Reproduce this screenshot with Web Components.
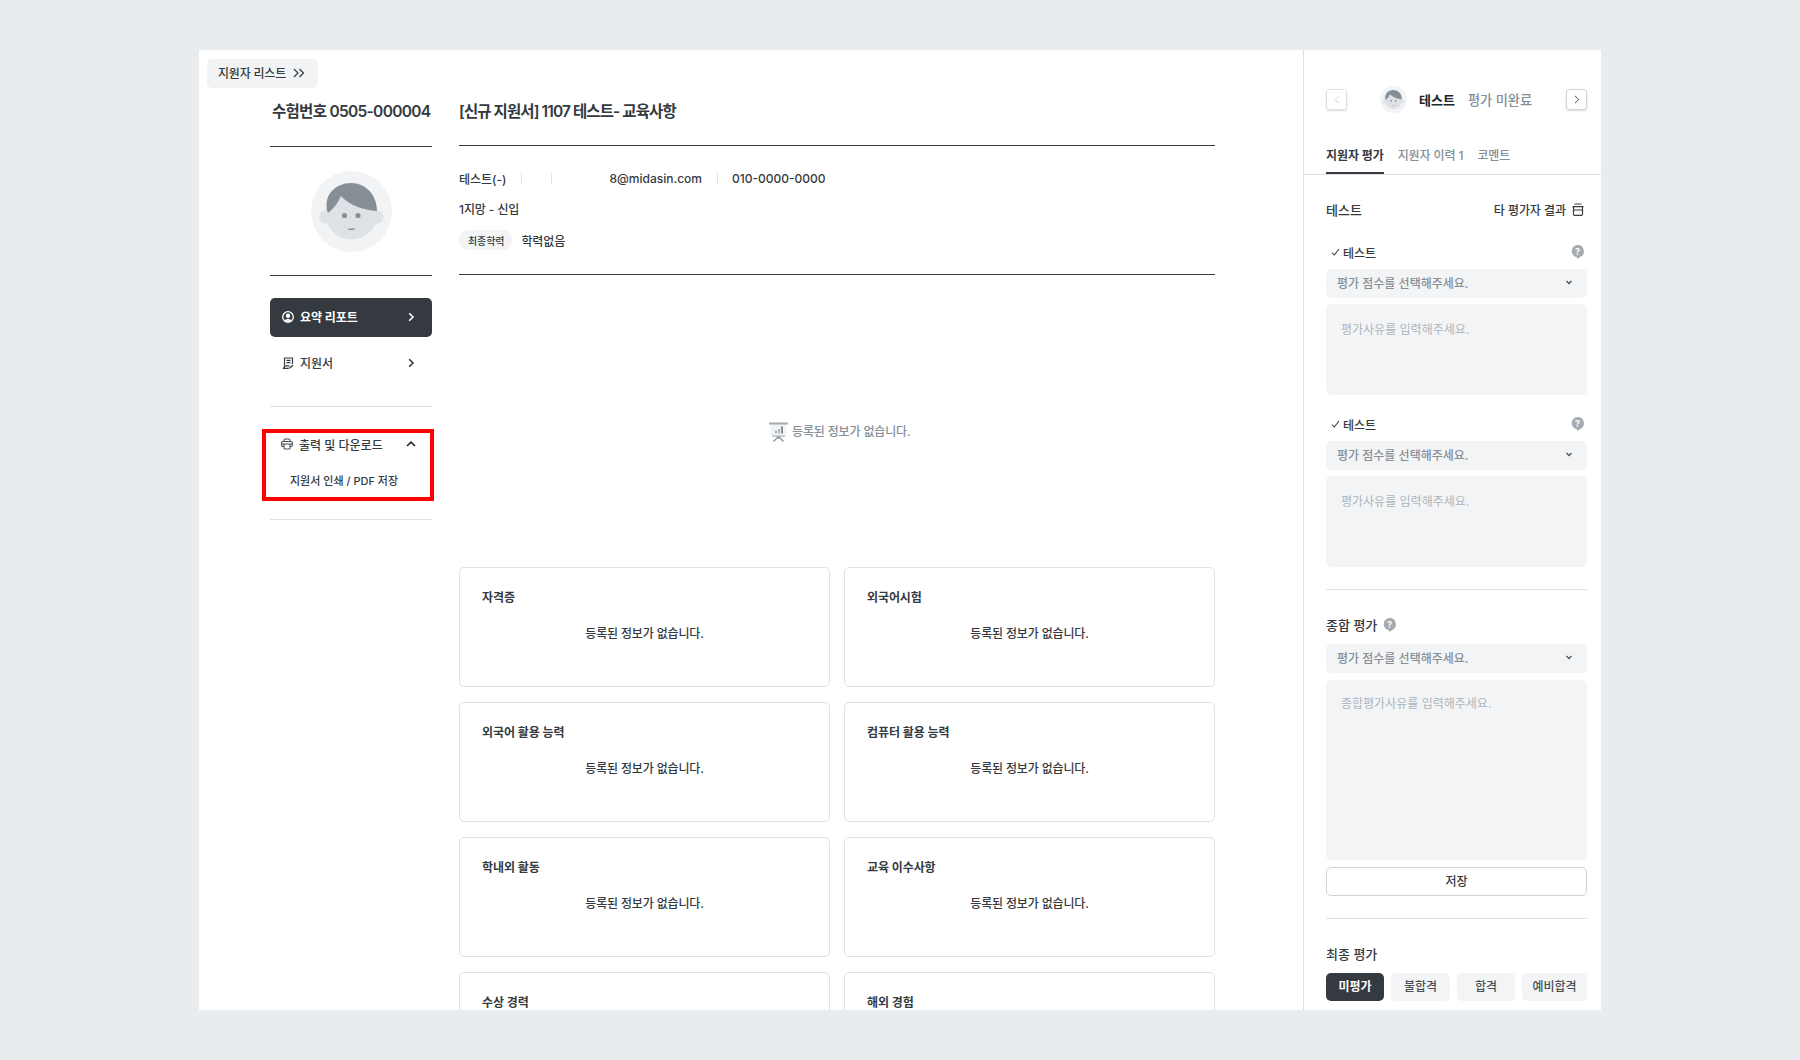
<!DOCTYPE html>
<html lang="ko">
<head>
<meta charset="UTF-8">
<title>지원자 평가</title>
<style>
  html, body { margin: 0; height: 100%; }
  body {
    background: #e9ecef;
    font-family: Inter, "Noto Sans CJK KR", sans-serif;
    color: #343a40;
    box-sizing: border-box;
    padding: 50px 199px;
    overflow: hidden;
  }
</style>
</head>
<body>
<app-frame>
  <list-link slot="main">지원자 리스트</list-link>
  <side-nav slot="side"></side-nav>
  <applicant-summary slot="content"></applicant-summary>
  <empty-note slot="content"></empty-note>
  <card-grid slot="content">
    <info-card msg="등록된 정보가 없습니다.">자격증</info-card>
    <info-card msg="등록된 정보가 없습니다.">외국어시험</info-card>
    <info-card msg="등록된 정보가 없습니다.">외국어 활용 능력</info-card>
    <info-card msg="등록된 정보가 없습니다.">컴퓨터 활용 능력</info-card>
    <info-card msg="등록된 정보가 없습니다.">학내외 활동</info-card>
    <info-card msg="등록된 정보가 없습니다.">교육 이수사항</info-card>
    <info-card>수상 경력</info-card>
    <info-card>해외 경험</info-card>
  </card-grid>
  <eval-panel slot="panel"></eval-panel>
</app-frame>

<script>
  const avatarSvg = `<svg viewBox="0 0 81 81" width="100%" height="100%" style="display:block">
    <circle cx="40.5" cy="40.5" r="40.5" fill="#f1f3f5"/>
    <circle cx="14.5" cy="46" r="6.5" fill="#dee2e6"/><circle cx="66" cy="46" r="6.5" fill="#dee2e6"/>
    <ellipse cx="40.5" cy="42" rx="26" ry="26.5" fill="#dee2e6"/>
    <path d="M17 42C11 24 25 12 40 12c15 0 26 12 26 28-14-1-28-6-36-15-3 7-8 13-13 17z" fill="#868e96"/>
    <circle cx="33.5" cy="44.5" r="2.6" fill="#868e96"/><circle cx="47" cy="44.5" r="2.6" fill="#868e96"/>
    <path d="M36.5 57.5h8c-1 2-7 2-8 0z" fill="#868e96"/>
  </svg>`

  const chevronRight = `<svg width="7" height="10" viewBox="0 0 7 10" fill="none" stroke="currentColor" stroke-width="1.6"><path d="M1.2 1.200 5 5 1.200 8.800"/></svg>`

  const helpIcon = `<svg width="13" height="14" viewBox="0 0 13 14"><path d="M6.500 0a6.300 6.300 0 0 1 2.300 12.200L6.500 14l-.6-1.700A6.200 6.200 0 0 1 6.500 0z" fill="#a5abb2"/><text x="6.500" y="9.800" text-anchor="middle" font-size="9" font-weight="700" fill="#fff" font-family="Inter">?</text></svg>`

  class AppFrame extends HTMLElement {
    connectedCallback() {
      this.attachShadow({mode: 'open'})
      this.shadowRoot.innerHTML = `
      <style>
        :host { display: flex; height: 960px; background: #fff; overflow: hidden; }
        .main { flex: 1; min-width: 0; padding: 9px 0 0 8px; box-sizing: border-box; }
        .columns { display: flex; margin-top: -2px; padding-left: 63px; gap: 27px; }
        .side { width: 162px; flex: none; }
        .content { width: 756px; flex: none; }
        .panel { width: 298px; flex: none; box-sizing: border-box; border-left: 1px solid #dee2e6; }
      </style>
      <div class="main">
        <slot name="main"></slot>
        <div class="columns">
          <div class="side"><slot name="side"></slot></div>
          <div class="content"><slot name="content"></slot></div>
        </div>
      </div>
      <div class="panel"><slot name="panel"></slot></div>`
    }
  }

  class ListLink extends HTMLElement {
    connectedCallback() {
      this.attachShadow({mode: 'open'})
      this.shadowRoot.innerHTML = `
      <style>
        :host { display: flex; width: 111px; height: 29px; box-sizing: border-box; padding: 0 0 2px 11px; gap: 7px;
          align-items: center; background: #f1f3f5; border-radius: 5px; font-size: 12px; letter-spacing: -0.2px; font-weight: 500; color: #343a40; }
      </style>
      <slot></slot>
      <svg width="12" height="10" viewBox="0 0 12 10" fill="none" stroke="#343a40" stroke-width="1.200"><path d="M1 1l4 4-4 4M6.500 1l4 4-4 4"/></svg>`
    }
  }

  class SideNav extends HTMLElement {
    connectedCallback() {
      this.attachShadow({mode: 'open'})
      this.shadowRoot.innerHTML = `
      <style>
        :host { display: block; }
        h2 { margin: 0; height: 45px; padding: 15px 0 0 2px; font-size: 15.5px; line-height: 22px; font-weight: 600; letter-spacing: -0.7px; color: #343a40; white-space: nowrap; }
        .rule { height: 1px; background: #343a40; }
        .photo { width: 81px; height: 81px; margin: 24px auto 23px; }
        .thin { height: 1px; background: #dee2e6; }
        .item { display: flex; align-items: center; height: 39px; box-sizing: border-box; padding: 0 17px 2px 12px; border-radius: 5px; font-size: 12px; font-weight: 600; letter-spacing: -0.1px; gap: 6px; }
        .item .t { flex: 1; }
        .dark { background: #343a40; color: #fff; margin-top: 22px; }
        .plain { margin-top: 7px; margin-bottom: 23px; font-weight: 500; }
        .box { margin: 22px -2px 18px -8px; height: 72px; box-sizing: border-box; border: 4px solid #f00; display: flex; flex-direction: column; }
        .box .head { display: flex; align-items: center; height: 22px; flex: none; padding: 0 14px 0 15px; font-size: 12px; font-weight: 500; gap: 6px; }
        .box .head .t { flex: 1; }
        .box .sub { padding-left: 24px; margin-top: 18px; font-size: 11px; font-weight: 500; line-height: 16px; }
      </style>
      <h2>수험번호 0505-000004</h2>
      <div class="rule"></div>
      <div class="photo">${avatarSvg}</div>
      <div class="rule"></div>
      <div class="item dark">
        <svg width="12" height="12" viewBox="0 0 12 12" fill="none"><circle cx="6" cy="6" r="5.300" stroke="#fff" stroke-width="1.300"/><circle cx="6" cy="4.800" r="2.200" fill="#fff"/><path d="M2.600 9.500C3.500 7.500 8.500 7.500 9.400 9.500 8 11 4 11 2.600 9.500z" fill="#fff"/></svg>
        <span class="t">요약 리포트</span>${chevronRight}
      </div>
      <div class="item plain">
        <svg width="12" height="12" viewBox="0 0 12 12" fill="none" stroke="#343a40" stroke-width="1.200"><path d="M2.500 8V1h8v6M.8 11.400h6M.8 11.400c1 0 1.700-1 1.700-2.600h5M4.500 3.300h4M4.500 5.600h4"/><path d="M7.500 11.300l3.500-3" stroke-width="1.500"/></svg>
        <span class="t">지원서</span>${chevronRight}
      </div>
      <div class="thin"></div>
      <div class="box">
        <div class="head">
          <svg width="12" height="12" viewBox="0 0 12 12" fill="none" stroke="#495057" stroke-width="1.100"><path d="M3 3.500V2.300C3 1.300 3.500 1 4.300 1h3.400C8.500 1 9 1.300 9 2.300v1.200M3 8.500H2C1 8.500.6 8 .6 7V5.200c0-1 .6-1.700 1.600-1.700h7.600c1 0 1.600.7 1.600 1.700V7c0 1-.4 1.500-1.400 1.500H9M.6 6h10.800M3 6.500v3.200c0 1 .5 1.300 1.300 1.300h3.400C8.500 11 9 10.700 9 9.700V6.500"/></svg>
          <span class="t">출력 및 다운로드</span>
          <svg width="10" height="6" viewBox="0 0 10 6" fill="none" stroke="#212529" stroke-width="1.700"><path d="M1 5 5 1.200 9 5"/></svg>
        </div>
        <div class="sub">지원서 인쇄 / PDF 저장</div>
      </div>
      <div class="thin"></div>`
    }
  }

  class ApplicantSummary extends HTMLElement {
    connectedCallback() {
      this.attachShadow({mode: 'open'})
      this.shadowRoot.innerHTML = `
      <style>
        :host { display: block; font-size: 12px; font-weight: 500; color: #343a40; }
        h1 { margin: 0; height: 44px; padding-top: 15px; font-size: 15.500px; line-height: 22px; font-weight: 600; letter-spacing: -0.9px; }
        .rule { height: 1px; background: #343a40; }
        .row { display: flex; align-items: center; height: 18px; }
        .r1 { margin-top: 23px; }
        .r2 { margin-top: 12px; letter-spacing: -0.1px; }
        .bar { width: 1px; height: 11px; background: #dee2e6; }
        .r3 { margin-top: 13px; height: 20px; margin-bottom: 24px; gap: 8px; letter-spacing: -0.1px; }
        .pill { display: flex; align-items: center; height: 20px; padding: 0 9px; border-radius: 10px; background: #f3f4f6; font-size: 10px; }
      </style>
      <h1>[신규 지원서] 1107 테스트- 교육사항</h1>
      <div class="rule"></div>
      <div class="row r1">
        <span>테스트(-)</span>
        <span class="bar" style="margin-left:14px"></span>
        <span class="bar" style="margin-left:29px"></span>
        <span style="margin-left:58px">8@midasin.com</span>
        <span class="bar" style="margin-left:15px"></span>
        <span style="margin-left:14px">010-0000-0000</span>
      </div>
      <div class="row r2">1지망 - 신입</div>
      <div class="row r3"><span class="pill">최종학력</span><span>학력없음</span></div>
      <div class="rule"></div>`
    }
  }

  class EmptyNote extends HTMLElement {
    connectedCallback() {
      this.attachShadow({mode: 'open'})
      this.shadowRoot.innerHTML = `
      <style>
        :host { display: flex; height: 292px; box-sizing: border-box; padding: 147px 0 0 310px; gap: 4px; color: #868e96; font-size: 12px; letter-spacing: -0.15px; font-weight: 500; line-height: 20px; align-items: flex-start; }
      </style>
      <svg width="19" height="20" viewBox="0 0 19 20" fill="none">
        <path d="M1.500 2h16v11.500h-16z" fill="#f1f3f5"/>
        <path d="M0 .5h19V2.500H0z" fill="#a5abb2"/>
        <path d="M6 8.500h2v3H6zM9 7h2v4.500H9z" fill="#adb5bd"/>
        <path d="M12 4.500h2v7h-2z" fill="#868e96"/>
        <path d="M3 13.500h13v1.200H3z" fill="#a5abb2"/>
        <path d="M9.500 14.500v2M9 15 4.500 19.500M10 15l4.500 4.500" stroke="#868e96" stroke-width="1.200"/>
      </svg>
      <span>등록된 정보가 없습니다.</span>`
    }
  }

  class CardGrid extends HTMLElement {
    connectedCallback() {
      this.attachShadow({mode: 'open'})
      this.shadowRoot.innerHTML = `
      <style>:host { display: grid; grid-template-columns: 371px 371px; gap: 15px 14px; }</style>
      <slot></slot>`
    }
  }

  class InfoCard extends HTMLElement {
    connectedCallback() {
      const msg = this.getAttribute('msg')
      this.attachShadow({mode: 'open'})
      this.shadowRoot.innerHTML = `
      <style>
        :host { display: block; height: 120px; box-sizing: border-box; border: 1px solid #dee2e6; border-radius: 5px; padding: 21px 22px 0; }
        .title { font-size: 12px; font-weight: 600; line-height: 18px; color: #343a40; letter-spacing: -0.1px; }
        .msg { margin-top: 18px; text-align: center; font-size: 12px; letter-spacing: -0.15px; font-weight: 500; line-height: 18px; color: #343a40; }
      </style>
      <div class="title"><slot></slot></div>
      ${msg ? `<div class="msg">${msg}</div>` : ''}`
    }
  }

  class EvalField extends HTMLElement {
    connectedCallback() {
      const ph = this.getAttribute('placeholder')
      const h = this.getAttribute('area')
      const gap = this.getAttribute('gap') || 6
      const pad = this.getAttribute('pad') || 18
      this.attachShadow({mode: 'open'})
      this.shadowRoot.innerHTML = `
      <style>
        :host { display: block; }
        .select { display: flex; align-items: center; justify-content: space-between; height: 29px; box-sizing: border-box; padding: 0 15px 2px 11px; border-radius: 5px; background: #f3f4f6; color: #868e96; font-size: 12px; font-weight: 500; }
        .area { margin-top: ${gap}px; height: ${h}px; box-sizing: border-box; padding: ${pad}px 15px; border-radius: 5px; background: #f3f4f6; color: #adb5bd; font-size: 12px; line-height: 16px; }
      </style>
      <div class="select">평가 점수를 선택해주세요.
        <svg width="6" height="5" viewBox="0 0 6 5" fill="none" stroke="#495057" stroke-width="1.300"><path d="M.5 1 3 3.500 5.500 1"/></svg>
      </div>
      <div class="area">${ph}</div>`
    }
  }

  class EvalPanel extends HTMLElement {
    connectedCallback() {
      const check = `<svg width="9" height="8" viewBox="0 0 9 8" fill="none" stroke="#343a40" stroke-width="1.100"><path d="M1 4.500 3.300 7 8 1"/></svg>`
      this.attachShadow({mode: 'open'})
      this.shadowRoot.innerHTML = `
      <style>
        :host { display: block; color: #343a40; }
        .top { display: flex; align-items: center; height: 27px; margin: 36px 14px 0 22px; }
        .nav { width: 21px; height: 21px; box-sizing: border-box; border: 1px solid #ced4da; border-radius: 3px; box-shadow: 0 1px 2px rgba(0,0,0,.15); display: flex; align-items: center; justify-content: center; color: #495057; }
        .nav.off { color: #ced4da; border-color: #dee2e6; }
        .nav svg { width: 6px; height: 9px; }
        .mini { width: 27px; height: 27px; margin-left: 33px; }
        .name { margin-left: 12px; font-size: 13px; font-weight: 700; color: #212529; }
        .state { margin-left: 13px; font-size: 13.200px; font-weight: 500; color: #868e96; flex: 1; }
        .tabs { display: flex; gap: 14px; height: 40px; margin-top: 21px; padding: 0 14px 0 22px; border-bottom: 1px solid #dee2e6; font-size: 12px; letter-spacing: -0.1px; font-weight: 500; color: #868e96; }
        .tabs div { height: 40px; padding-top: 13px; line-height: 18px; box-sizing: border-box; }
        .tabs .on { color: #343a40; font-weight: 600; box-shadow: inset 0 -2px #343a40; }
        .body { padding: 25px 14px 0 22px; }
        .head { display: flex; justify-content: space-between; align-items: center; height: 20px; box-sizing: border-box; padding-bottom: 2px; font-size: 13px; font-weight: 500; }
        .other { display: flex; align-items: center; gap: 6px; font-size: 12px; letter-spacing: -0.05px; margin-right: 3px; }
        .label { display: flex; align-items: center; height: 18px; margin: 0 3px 8px 5px; font-size: 12px; font-weight: 500; gap: 3px; }
        .label .t { flex: 1; }
        .l1 { margin-top: 23px; }
        .l2 { margin-top: 20px; }
        hr { border: 0; height: 1px; background: #dee2e6; margin: 22px 0 0; }
        .sum { display: flex; align-items: center; gap: 6px; height: 20px; box-sizing: border-box; padding-bottom: 3px; margin: 26px 0 8px; font-size: 13px; font-weight: 500; }
        .save { margin-top: 7px; height: 29px; box-sizing: border-box; border: 1px solid #ced4da; border-radius: 5px; text-align: center; line-height: 27px; font-size: 12px; font-weight: 500; }
        .final { height: 20px; margin: 25px 0 9px; line-height: 20px; font-size: 13px; font-weight: 500; }
        .btns { display: grid; grid-template-columns: 58px 59px 58px 65px; gap: 7px; }
        .btns div { height: 28px; border-radius: 5px; background: #f3f4f6; text-align: center; line-height: 28px; font-size: 12px; font-weight: 500; color: #495057; }
        .btns .on { background: #343a40; color: #fff; font-weight: 600; }
      </style>
      <div class="top">
        <div class="nav off"><svg viewBox="0 0 6 9" fill="none" stroke="currentColor"><path d="M5 .8 1.200 4.500 5 8.200"/></svg></div>
        <div class="mini">${avatarSvg}</div>
        <span class="name">테스트</span><span class="state">평가 미완료</span>
        <div class="nav"><svg viewBox="0 0 6 9" fill="none" stroke="currentColor"><path d="M1 .8l3.800 3.700L1 8.200"/></svg></div>
      </div>
      <div class="tabs">
        <div class="on">지원자 평가</div><div>지원자 이력 1</div><div>코멘트</div>
      </div>
      <div class="body">
        <div class="head">
          <span>테스트</span>
          <span class="other">타 평가자 결과
            <svg width="12" height="13" viewBox="0 0 12 13" fill="none" stroke="#343a40" stroke-width="1.200"><path d="M2.500 1h7M.5 3.700h11M1.500 3.700v7.500c0 .8.400 1.200 1.200 1.200h6.600c.8 0 1.200-.4 1.200-1.200V3.700M1.500 7h9"/></svg>
          </span>
        </div>
        <div class="label l1">${check}<span class="t">테스트</span>${helpIcon}</div>
        <eval-field placeholder="평가사유를 입력해주세요." area="91"></eval-field>
        <div class="label l2">${check}<span class="t">테스트</span>${helpIcon}</div>
        <eval-field placeholder="평가사유를 입력해주세요." area="91"></eval-field>
        <hr>
        <div class="sum">종합 평가 ${helpIcon}</div>
        <eval-field placeholder="종합평가사유를 입력해주세요." area="180" gap="7" pad="16"></eval-field>
        <div class="save">저장</div>
        <hr>
        <div class="final">최종 평가</div>
        <div class="btns"><div class="on">미평가</div><div>불합격</div><div>합격</div><div>예비합격</div></div>
      </div>`
    }
  }

  customElements.define('eval-field', EvalField)
  customElements.define('app-frame', AppFrame)
  customElements.define('list-link', ListLink)
  customElements.define('side-nav', SideNav)
  customElements.define('applicant-summary', ApplicantSummary)
  customElements.define('empty-note', EmptyNote)
  customElements.define('card-grid', CardGrid)
  customElements.define('info-card', InfoCard)
  customElements.define('eval-panel', EvalPanel)
</script>
</body>
</html>
